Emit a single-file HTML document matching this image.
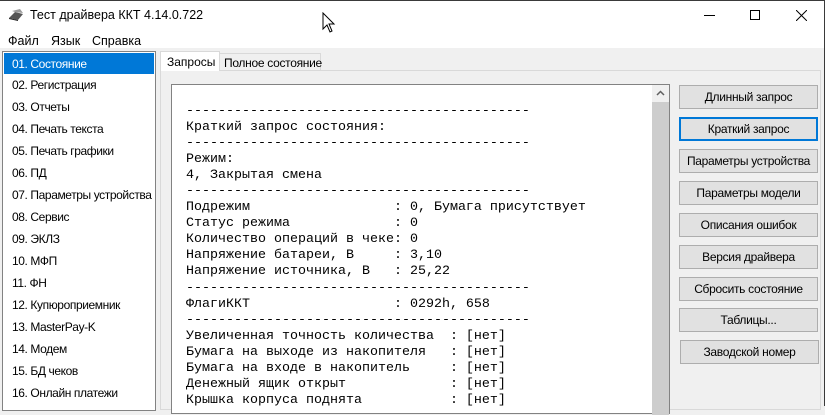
<!DOCTYPE html><html><head><meta charset="utf-8"><style>
*{margin:0;padding:0;box-sizing:border-box}
body{width:825px;height:406px;overflow:hidden;background:#f0f0f0;font-family:"Liberation Sans",sans-serif;font-size:12px;color:#000;position:relative}
.abs{position:absolute;white-space:nowrap}
#title{left:0;top:0;width:825px;height:48px;background:#fff;border-top:1px solid #3a3a3a}
.list{left:2px;top:51px;width:154px;height:360px;background:#fff;border:1px solid #828282;overflow:hidden}
.list div{height:22px;line-height:22px;padding-left:9px;font-size:12px;letter-spacing:-0.4px;white-space:nowrap}
.list .sel{background:#0078d7;color:#fff;margin:1px 1px 0 1px;height:21px;padding-left:8px}
.btn{position:absolute;left:679px;width:139px;height:24px;background:#e1e1e1;border:1px solid #adadad;text-align:center;line-height:22px;font-size:12px;letter-spacing:-0.3px;white-space:nowrap}
pre{position:absolute;left:186px;top:104px;font-family:"Liberation Mono",monospace;font-size:13.33px;line-height:16.05px;letter-spacing:0}
</style></head><body>
<div id="title" class="abs"></div>
<div class="abs" style="left:824px;top:0;width:1px;height:406px;background:#3a3a3a"></div>
<svg class="abs" style="left:7px;top:8px" width="18" height="14"><path d="M2 10 L8 4 L16 6 L11 12 Z" fill="#555"/><path d="M5 3 L13 1 L16 5 L8 4Z" fill="#999"/><path d="M2 10 L11 12 L11 13 L2 11Z" fill="#222"/></svg>
<div class="abs" style="left:30px;top:8px;font-size:12.5px">Тест драйвера ККТ 4.14.0.722</div>
<svg class="abs" style="left:322px;top:12px" width="14" height="22"><path d="M1 1 L1 17 L5 13 L8 20 L10 19 L7 12 L12 12 Z" fill="#fff" stroke="#000"/></svg>
<div class="abs" style="left:704px;top:15px;width:11px;height:1px;background:#000"></div>
<div class="abs" style="left:750px;top:10px;width:10px;height:10px;border:1px solid #000"></div>
<svg class="abs" style="left:796px;top:10px" width="11" height="11"><path d="M0 0L11 11M11 0L0 11" stroke="#000" stroke-width="1"/></svg>
<div class="abs" style="left:8px;top:34px;font-size:12.5px">Файл</div>
<div class="abs" style="left:51px;top:34px;font-size:12.5px">Язык</div>
<div class="abs" style="left:92px;top:34px;font-size:12.5px">Справка</div>
<div class="list abs">
<div class="sel">01. Состояние</div>
<div>02. Регистрация</div><div>03. Отчеты</div><div>04. Печать текста</div><div>05. Печать графики</div><div>06. ПД</div><div>07. Параметры устройства</div><div>08. Сервис</div><div>09. ЭКЛЗ</div><div>10. МФП</div><div>11. ФН</div><div>12. Купюроприемник</div><div>13. MasterPay-K</div><div>14. Модем</div><div>15. БД чеков</div><div>16. Онлайн платежи</div>
</div>
<div class="abs" style="left:160px;top:70px;width:661px;height:340px;border:1px solid #d9d9d9;background:#f0f0f0"></div>
<div class="abs" style="left:160px;top:51px;width:60px;height:20px;background:#fff;border:1px solid #d9d9d9;border-bottom:none;padding:3px 0 0 6px;font-size:12px">Запросы</div>
<div class="abs" style="left:219px;top:53px;width:102px;height:18px;background:#f0f0f0;border:1px solid #d9d9d9;padding:2px 0 0 4px;font-size:12px;letter-spacing:-0.3px">Полное состояние</div>
<div class="abs" style="left:171px;top:84px;width:499px;height:330px;background:#fff;border:1px solid #828282"></div>
<div class="abs" style="left:652px;top:85px;width:17px;height:330px;background:#cdcdcd"></div>
<div class="abs" style="left:652px;top:85px;width:17px;height:17px;background:#f0f0f0"></div>
<svg class="abs" style="left:656px;top:90px" width="9" height="6"><path d="M1 5L4.5 1.5L8 5" stroke="#606060" stroke-width="1.5" fill="none"/></svg>
<pre>-------------------------------------------
Краткий запрос состояния:
-------------------------------------------
Режим:
4, Закрытая смена
-------------------------------------------
Подрежим                  : 0, Бумага присутствует
Статус режима             : 0
Количество операций в чеке: 0
Напряжение батареи, В     : 3,10
Напряжение источника, В   : 25,22
-------------------------------------------
ФлагиККТ                  : 0292h, 658
-------------------------------------------
Увеличенная точность количества  : [нет]
Бумага на выходе из накопителя   : [нет]
Бумага на входе в накопитель     : [нет]
Денежный ящик открыт             : [нет]
Крышка корпуса поднята           : [нет]</pre>
<div class="btn" style="top:85px">Длинный запрос</div>
<div class="btn" style="top:117px;border:2px solid #0078d7;line-height:20px">Краткий запрос</div>
<div class="btn" style="top:149px">Параметры устройства</div>
<div class="btn" style="top:181px">Параметры модели</div>
<div class="btn" style="top:213px">Описания ошибок</div>
<div class="btn" style="top:245px">Версия драйвера</div>
<div class="btn" style="top:277px">Сбросить состояние</div>
<div class="btn" style="top:308px">Таблицы...</div>
<div class="btn" style="top:340px;left:680px">Заводской номер</div>
</body></html>
